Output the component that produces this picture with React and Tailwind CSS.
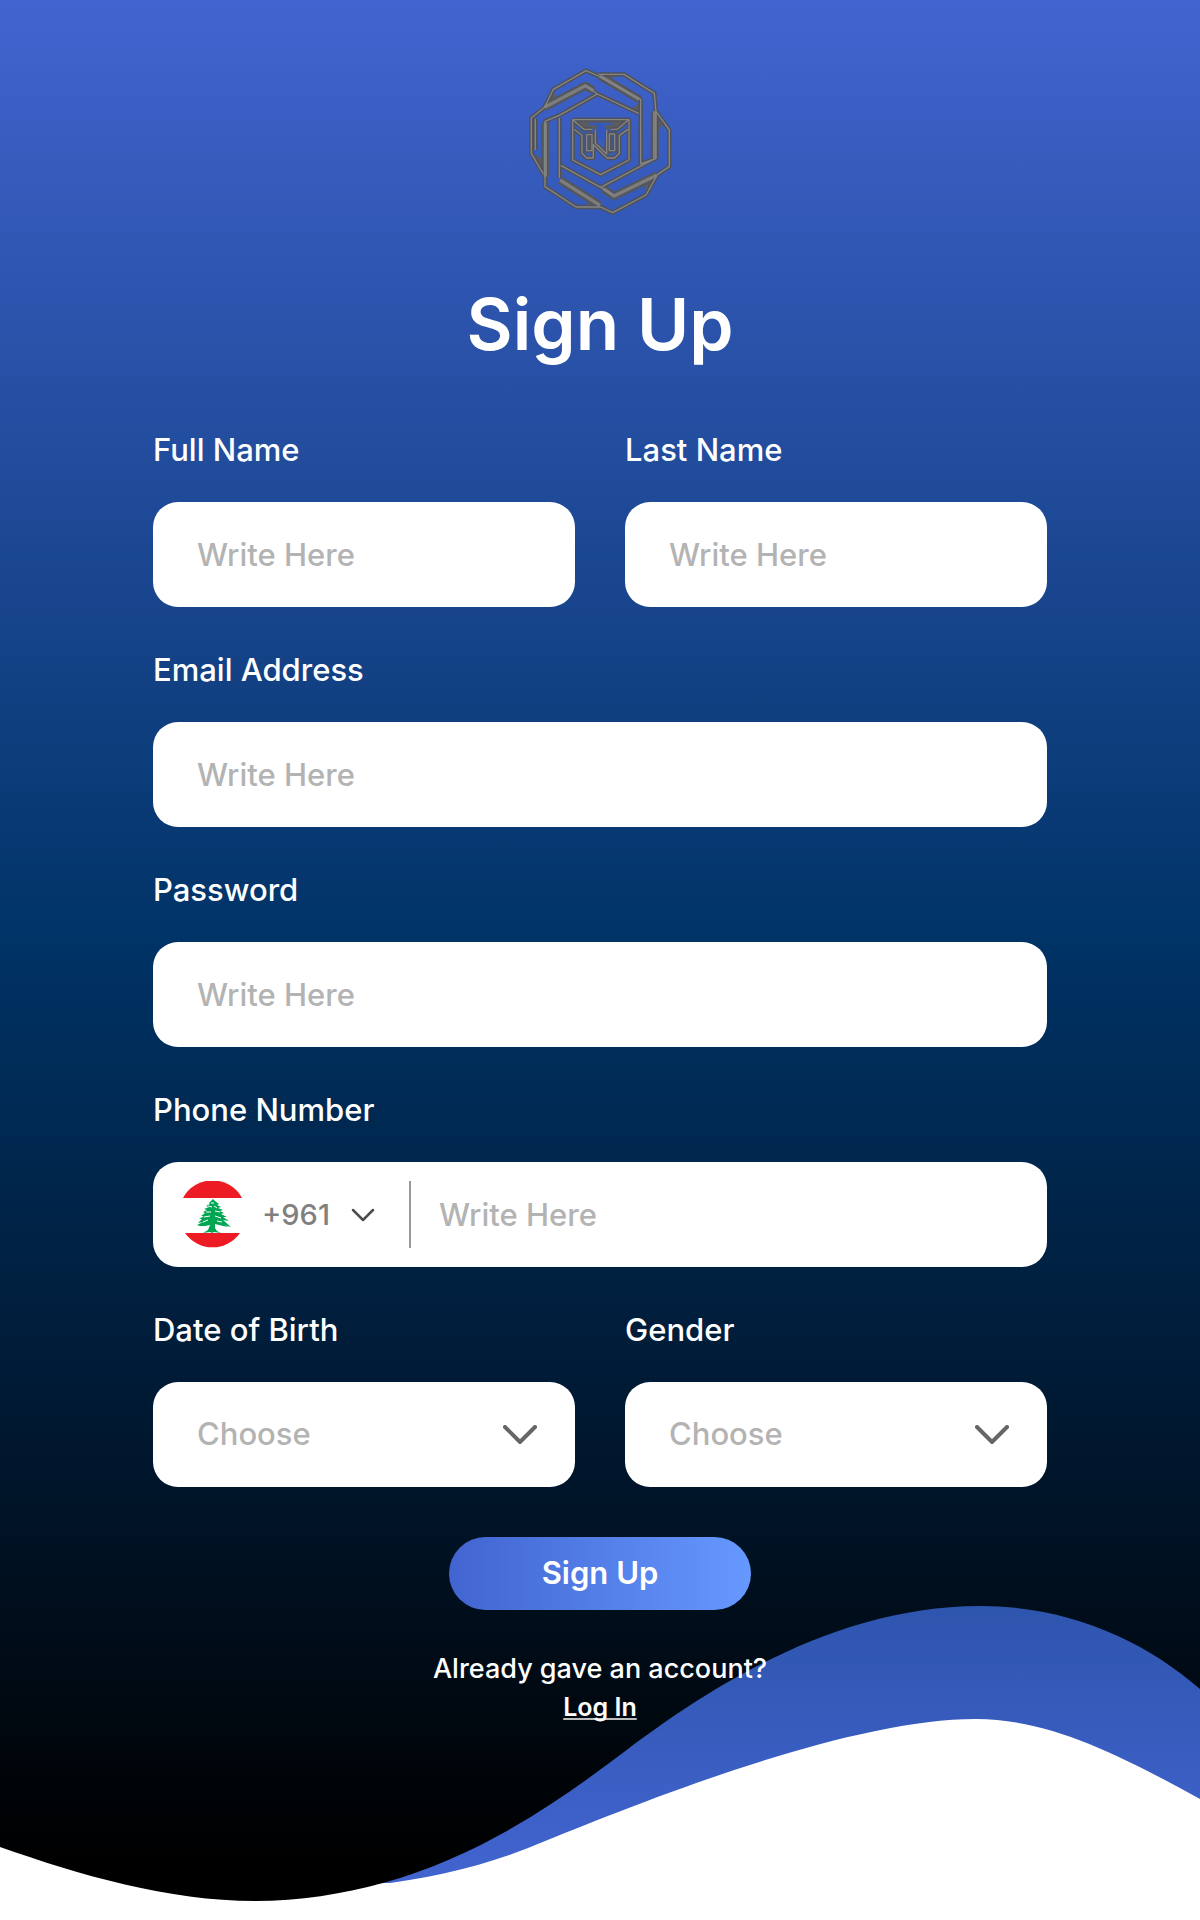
import React from "react";

const labelClass = "text-[31px] leading-[45px] font-medium text-white";
const boxClass =
  "h-[105px] w-full rounded-[25px] bg-white px-11 text-[31px] font-medium text-[#666666] outline-none placeholder:text-[#b3b3b3] placeholder:opacity-100";

const knotLines = [
  "M104 172L130 118L228 62L265 78L392 148V342L438 325V188L433 130L342 73H265",
  "M104 172L64 204V310L100 372M76 206V300",
  "M262 132L148 196L105 214V410L198 471H272L308 488L408 435L442 374",
  "M262 132L386 190M226 105L262 132",
  "M438 184L478 240V350L442 374",
  "M148 204V384M152 346L272 412L436 325M272 412L312 436",
];

const knotBands = [
  "M104 172L226 107L250 122",
  "M270 78L388 148",
  "M434 184V324",
  "M440 376L312 438L280 416",
  "M150 390L270 466",
  "M106 218V380",
];

const knotWedges = [
  "M265 72H342L306 84L322 106Z",
  "M438 184L476 240L454 224L446 250Z",
  "M442 374L408 434L402 398Z",
  "M272 471H200L236 462L230 446Z",
  "M64 306L100 330V372Z",
  "M104 172L130 118L140 150Z",
  "M392 150V190L360 176L378 168Z",
  "M148 346V384L160 372Z",
];

const shieldLines = [
  "M188 209H356L322 238H302M188 209L222 238H246",
  "M188 209V330L272 374L357 330V209",
  "M192 238L216 256V310L230 324H250V284L292 324H314L328 310V256L354 238",
  "M230 254H246V302H230ZM298 252H314V302H298ZM256 240V280L290 312V240",
];

function Emblem() {
  const lines = [...knotLines, ...shieldLines];
  return (
    <svg
      viewBox="0 0 540 540"
      className="h-[180px] w-[180px]"
      role="img"
      aria-label="Emblem"
      fill="none"
      strokeLinejoin="round"
    >
      <g fill="#5a5c60">
        {knotWedges.map((d) => (
          <path key={d} d={d} />
        ))}
        <path d="M193 211H351L322 238H222Z" />
      </g>
      <g stroke="#55575c" strokeWidth="24">
        {knotBands.map((d) => (
          <path key={d} d={d} />
        ))}
      </g>
      <g stroke="#505258" strokeWidth="13">
        {lines.map((d) => (
          <path key={d} d={d} />
        ))}
      </g>
      <g stroke="#7d7d7d" strokeWidth="10">
        {knotBands.map((d) => (
          <path key={d} d={d} />
        ))}
      </g>
      <g stroke="#858585" strokeWidth="4">
        {lines.map((d) => (
          <path key={d} d={d} />
        ))}
      </g>
      <path d="M236 218H306V225H286V270H274L260 262V225H236Z" fill="#3558bc" />
    </svg>
  );
}

function LebanonFlag() {
  return (
    <svg viewBox="0 0 67 67" className="h-[67px] w-[67px] shrink-0" aria-hidden="true">
      <path d="M4 17A33.5 33.5 0 0 1 63 17Z" fill="#ed1c24" />
      <path d="M6 52A33.5 33.5 0 0 0 61 52Z" fill="#ed1c24" />
      <path
        fill="#00a651"
        d="M34 18L36 20L40 23L38 24L42 26L39 27L44 29L41 30L45 32L42 33L48 36L44 36L50 40L44 39L52 46L46 44L50 46L44 45L40 44L36 43L36 47L38 50L42 52L35 51L33 52L31 51L24 52L29 49L31 44L26 45L21 45L18 44L24 41L19 42L23 38L20 38L25 35L22 35L26 32L24 31L28 29L25 28L30 26L27 25L31 23L30 22Z"
      />
      <path
        d="M29 25L33 26M35 25L38 27M27 31L32 31M36 30L41 31M25 36L31 35M36 35L42 37M24 41L29 39M38 40L43 41M32 22L35 22"
        stroke="#ffffff"
        strokeWidth="1"
      />
    </svg>
  );
}

function LargeChevron() {
  return (
    <svg
      viewBox="0 0 36 20"
      className="pointer-events-none absolute right-9 top-[43px] h-5 w-9"
      fill="none"
      aria-hidden="true"
    >
      <path d="M2 2L17 17L32 2" stroke="#666666" strokeWidth="4" strokeLinecap="round" strokeLinejoin="round" />
    </svg>
  );
}

function TextField({ id, label, type = "text" }) {
  return (
    <div className="flex min-w-0 flex-1 flex-col gap-[30px]">
      <label htmlFor={id} className={labelClass}>{label}</label>
      <input id={id} type={type} placeholder="Write Here" className={boxClass} />
    </div>
  );
}

function SelectField({ id, label, options }) {
  return (
    <div className="flex min-w-0 flex-1 flex-col gap-[30px]">
      <label htmlFor={id} className={labelClass}>{label}</label>
      <div className="relative">
        <select id={id} defaultValue="" className={boxClass + " appearance-none text-[#b3b3b3]!"}>
          <option value="">Choose</option>
          {options.map((o) => (
            <option key={o}>{o}</option>
          ))}
        </select>
        <LargeChevron />
      </div>
    </div>
  );
}

function PhoneField() {
  return (
    <div className="flex flex-col gap-[30px]">
      <label htmlFor="phone" className={labelClass}>Phone Number</label>
      <div className="flex h-[105px] items-center rounded-[25px] bg-white pl-[26px] text-[31px] font-medium">
        <LebanonFlag />
        <div className="relative ml-4 w-[113px] shrink-0">
          <select aria-label="Country code" className="w-full appearance-none text-[29px] leading-[45px] text-[#808080] outline-none">
            <option>+961</option>
          </select>
          <svg
            viewBox="0 0 24 14"
            className="pointer-events-none absolute right-0 top-[17px] h-[14px] w-6"
            fill="none"
            aria-hidden="true"
          >
            <path d="M2 2L12 12L22 2" stroke="#4d4d4d" strokeWidth="2.5" strokeLinecap="round" strokeLinejoin="round" />
          </svg>
        </div>
        <div className="ml-[34px] h-[67px] w-0.5 shrink-0 bg-[#999999]" />
        <input
          id="phone"
          type="tel"
          placeholder="Write Here"
          className="h-full min-w-0 flex-1 rounded-r-[25px] px-7 text-[#666666] outline-none placeholder:text-[#b3b3b3] placeholder:opacity-100"
        />
      </div>
    </div>
  );
}

function Waves() {
  return (
    <svg
      viewBox="0 0 1200 340"
      preserveAspectRatio="none"
      className="absolute inset-x-0 bottom-0 h-[340px] w-full"
      aria-hidden="true"
    >
      <defs>
        <linearGradient id="wave" x1="0" y1="0" x2="0" y2="1">
          <stop offset="0" stopColor="#2e55ae" />
          <stop offset="1" stopColor="#4264d0" />
        </linearGradient>
      </defs>
      <path d="M0 267C80 295 168 321 255 321C300 321 342 314 383 303L1200 303V340H0Z" fill="#ffffff" />
      <path
        d="M383 303C480 276 557 223 628 169C700 115 830 26 980 26C1070 26 1145 61 1200 109V303Z"
        fill="url(#wave)"
      />
      <path
        d="M376 305C430 298 480 287 528 268C620 231 840 139 976 139C1050 139 1120 175 1200 219V340H376Z"
        fill="#ffffff"
      />
    </svg>
  );
}

export default function App() {
  return (
    <main className="relative min-h-screen bg-[linear-gradient(180deg,#4264d0_0%,#003366_49%,#000000_97%)] font-['Inter',sans-serif]">
      <Waves />
      <div className="relative mx-auto flex w-full max-w-[894px] flex-col pt-[50px] pb-48">
        <div className="flex justify-center">
          <Emblem />
        </div>
        <h1 className="mt-11 text-center text-[71px] leading-[100px] font-semibold text-white">Sign Up</h1>
        <form className="mt-[53px] flex flex-col gap-10" onSubmit={(e) => e.preventDefault()}>
          <div className="flex gap-[50px]">
            <TextField id="full-name" label="Full Name" />
            <TextField id="last-name" label="Last Name" />
          </div>
          <TextField id="email" label="Email Address" type="email" />
          <TextField id="password" label="Password" type="password" />
          <PhoneField />
          <div className="flex gap-[50px]">
            <SelectField id="birth" label="Date of Birth" options={["1990", "2000"]} />
            <SelectField id="gender" label="Gender" options={["Female", "Male"]} />
          </div>
          <button
            type="submit"
            className="mt-[10px] h-[73px] w-[302px] self-center rounded-full bg-linear-to-r from-[#4264d0] to-[#6699ff] text-[31px] font-semibold text-white"
          >
            Sign Up
          </button>
        </form>
        <p className="mt-10 flex flex-col items-center text-[27px] leading-[38px] font-medium text-white">
          Already gave an account?
          <a
            href="#login"
            className="text-[25px] font-semibold underline decoration-[#bbbbbb] decoration-2 underline-offset-2 [text-decoration-skip-ink:none]"
          >
            Log In
          </a>
        </p>
      </div>
    </main>
  );
}
